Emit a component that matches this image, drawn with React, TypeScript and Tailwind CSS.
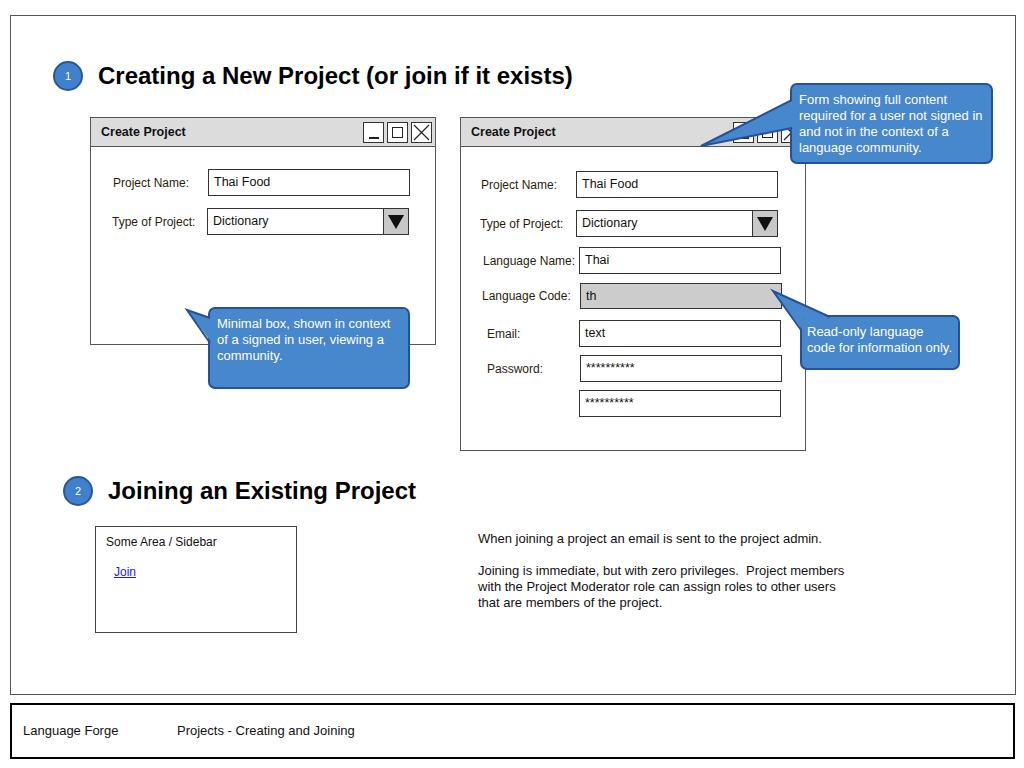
const sketch = "font-['Liberation_Sans',Arial,sans-serif]";

type Row = { label: string; value: string; labelPad: number; shift: number; mt: number; gray?: boolean; select?: boolean };

const smallRows: Row[] = [
  { label: 'Project Name:', value: 'Thai Food', labelPad: 1, shift: 0, mt: 0 },
  { label: 'Type of Project:', value: 'Dictionary', labelPad: 0, shift: -1, mt: 12, select: true },
];

const fullRows: Row[] = [
  { label: 'Project Name:', value: 'Thai Food', labelPad: 1, shift: 0, mt: 0 },
  { label: 'Type of Project:', value: 'Dictionary', labelPad: 0, shift: 0, mt: 12, select: true },
  { label: 'Language Name:', value: 'Thai', labelPad: 3, shift: 3, mt: 10 },
  { label: 'Language Code:', value: 'th', labelPad: 2, shift: 4, mt: 9, gray: true },
  { label: 'Email:', value: 'text', labelPad: 7, shift: 3, mt: 11 },
  { label: 'Password:', value: '**********', labelPad: 7, shift: 4, mt: 8 },
  { label: '', value: '**********', labelPad: 7, shift: 3, mt: 8 },
];

function WinButtons() {
  return (
    <div className="flex gap-[3px]">
      <div className="w-[21px] h-[21px] border border-[#333] bg-white flex items-end justify-center pb-[3px]">
        <div className="w-[10px] h-[1.5px] bg-[#222]" />
      </div>
      <div className="w-[21px] h-[21px] border border-[#333] bg-white flex items-center justify-center">
        <div className="w-[11px] h-[11px] border border-[#222]" />
      </div>
      <div className="w-[21px] h-[21px] border border-[#333] bg-white flex items-center justify-center">
        <svg width="17" height="17" viewBox="0 0 17 17">
          <path d="M1 1 L16 16 M16 1 L1 16" stroke="#222" strokeWidth="1.2" />
        </svg>
      </div>
    </div>
  );
}

function FormRow({ row }: { row: Row }) {
  return (
    <div className="flex items-center" style={{ marginTop: row.mt }}>
      <div className="w-[96px] text-[12px] text-[#2a1d0e]" style={{ paddingLeft: row.labelPad }}>
        {row.label}
      </div>
      <div
        className={`w-[202px] border border-[#333] flex items-stretch text-[12.5px] text-[#111] ${row.gray ? 'h-[26px] bg-[#cccccc]' : 'h-[27px] bg-white'}`}
        style={{ marginLeft: row.shift }}
      >
        <div className="flex-1 flex items-center px-[5px]">{row.value}</div>
        {row.select && (
          <div className="w-[25px] border-l border-[#333] bg-[#c8c8c8] flex items-center justify-center">
            <svg width="18" height="16" viewBox="0 0 18 16">
              <path d="M1 1 H17 L9 15 Z" fill="#111" />
            </svg>
          </div>
        )}
      </div>
    </div>
  );
}

function Window({ rows, height, padTop, padLeft }: { rows: Row[]; height: string; padTop: string; padLeft: string }) {
  return (
    <div className={`w-[346px] ${height} border border-[#555] bg-white`}>
      <div className="h-[29px] bg-[#dcdcdc] border-b border-[#555] flex items-center justify-between pl-[10px] pr-[3px]">
        <span className="text-[12.5px] font-bold text-[#111]">Create Project</span>
        <WinButtons />
      </div>
      <div className={`${padTop} ${padLeft}`}>
        {rows.map((r, i) => <FormRow key={i} row={r} />)}
      </div>
    </div>
  );
}

function Badge({ n }: { n: string }) {
  return (
    <div className="w-[30px] h-[30px] rounded-full bg-[#4080cc] border-2 border-[#2d5696] flex items-center justify-center text-white text-[11px]">
      {n}
    </div>
  );
}

const callout = "absolute bg-[#4787cc] border-2 border-[#25509a] rounded-[7px] text-white text-[13px] leading-[16px] whitespace-nowrap";

export default function App() {
  return (
    <div className={`relative w-[1024px] h-[768px] bg-white overflow-hidden ${sketch}`}>
      <div className="ml-[10px] mt-[15px] w-[1006px] h-[680px] border border-[#555]">
        <div className="mt-[45px] ml-[42px] flex items-center gap-[15px]">
          <Badge n="1" />
          <h1 className="text-[24px] font-bold leading-[30px] text-black">Creating a New Project (or join if it exists)</h1>
        </div>

        <div className="mt-[26px] ml-[79px] flex items-start gap-[24px]">
          <Window rows={smallRows} height="h-[228px]" padTop="pt-[22px]" padLeft="pl-[21px]" />
          <Window rows={fullRows} height="h-[334px]" padTop="pt-[24px]" padLeft="pl-[19px]" />
        </div>

        <div className="mt-[25px] ml-[52px] flex items-center gap-[15px]">
          <Badge n="2" />
          <h2 className="text-[24px] font-bold leading-[30px] text-black">Joining an Existing Project</h2>
        </div>

        <div className="mt-[20px] ml-[84px] flex items-start">
          <div className="w-[202px] h-[107px] border border-[#444] pt-[6px] pl-[10px] text-[12px] text-[#111]">
            <div>Some Area / Sidebar</div>
            <div className="mt-[12px] ml-[8px]">
              <span className="text-[#1a1aff] underline">Join</span>
            </div>
          </div>
          <div className="ml-[181px] mt-[5px] text-[13px] leading-[16px] text-[#111]">
            <p>When joining a project an email is sent to the project admin.</p>
            <p className="mt-[16px]">
              Joining is immediate, but with zero privileges.&nbsp; Project members<br />
              with the Project Moderator role can assign roles to other users<br />
              that are members of the project.
            </p>
          </div>
        </div>
      </div>

      <div className="ml-[10px] mt-[8px] w-[1005px] h-[56px] border-2 border-black flex items-center pl-[11px] text-[13px] text-[#111]">
        <span className="w-[154px]">Language Forge</span>
        <span>Projects - Creating and Joining</span>
      </div>

      {/* callouts */}
      <div className={`${callout} left-[208px] top-[307px] w-[202px] h-[82px] px-[7px] pt-[7px]`}>
        Minimal box, shown in context<br />of a signed in user, viewing a<br />community.
      </div>
      <div className={`${callout} left-[790px] top-[83px] w-[203px] h-[81px] px-[7px] pt-[7px]`}>
        Form showing full content<br />required for a user not signed in<br />and not in the context of a<br />language community.
      </div>
      <div className={`${callout} left-[800px] top-[315px] w-[160px] h-[55px] pl-[5px] pt-[7px] text-[12.5px]`}>
        Read-only language<br />code for information only.
      </div>

      <svg className="absolute left-0 top-0 pointer-events-none" width="1024" height="768">
        <polygon points="187,310 212,318 212,343" fill="#4787cc" />
        <polyline points="210,318 187,310 210,343" fill="none" stroke="#25509a" strokeWidth="2" />
        <polygon points="701,146 794,100 794,128" fill="#4787cc" />
        <polyline points="792,100 701,146 792,128" fill="none" stroke="#25509a" strokeWidth="2" />
        <polygon points="773,291 830,318 803,318 803,331" fill="#4787cc" />
        <polyline points="830,317 773,291 801,330" fill="none" stroke="#25509a" strokeWidth="2" />
      </svg>
    </div>
  );
}
